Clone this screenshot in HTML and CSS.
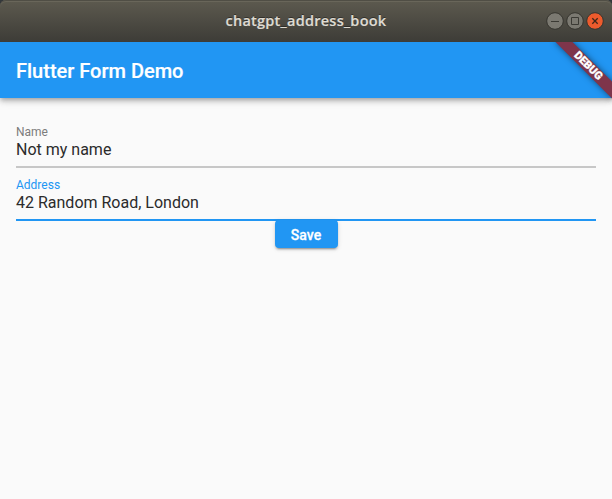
FILE: index.html
```html
<!DOCTYPE html>
<html lang="en">
<head>
<meta charset="utf-8">
<title>chatgpt_address_book</title>
<link rel="stylesheet" href="styles.css">
</head>
<body>
<div class="window">
  <header class="titlebar">
    <h1 class="window-title">chatgpt_address_book</h1>
    <div class="controls">
      <svg class="control" viewBox="0 0 18 18"><circle class="disc" cx="9" cy="9" r="8.3"/><path class="glyph" d="M5 9.5h8"/></svg>
      <svg class="control" viewBox="0 0 18 18"><circle class="disc" cx="9" cy="9" r="8.3"/><path class="glyph" d="M5.5 5.5h7v7h-7z"/></svg>
      <svg class="control close" viewBox="0 0 18 18"><circle class="disc" cx="9" cy="9" r="8.3"/><path class="glyph cross" d="M6.3 6.3l5.4 5.4M11.7 6.3l-5.4 5.4"/></svg>
    </div>
  </header>
  <main class="app">
    <div class="appbar">Flutter Form Demo</div>
    <div class="ribbon">DEBUG</div>
    <form class="form">
      <div class="field">
        <div class="label">Name</div>
        <div class="value">Not my name</div>
      </div>
      <div class="field focused">
        <div class="label">Address</div>
        <div class="value">42 Random Road, London</div>
      </div>
      <button class="save" type="button">Save</button>
    </form>
  </main>
</div>
</body>
</html>
```
FILE: styles.css
```css
* { box-sizing: border-box; }
body { margin: 0; background: #34383b; font-family: Roboto, sans-serif; }
.window { height: 499px; display: flex; flex-direction: column; }
.titlebar {
  height: 42px;
  display: grid;
  grid-template-columns: 1fr auto 1fr;
  align-items: center;
  padding-right: 8px;
  padding-left: 8px;
  border-radius: 6px 6px 0 0;
  background: linear-gradient(#5d5a4f, #3d3c37);
  box-shadow: inset 0 1px #504e45, inset 0 2px #69665a;
}
.window-title {
  grid-column: 2;
  margin: 0;
  font: 600 14.5px/20px "Open Sans", sans-serif;
  letter-spacing: .25px;
  width: 161px;
  white-space: nowrap;
  color: #dfdbd2;
  -webkit-text-stroke: .2px #dfdbd2;
  text-shadow: 0 -1px rgba(0, 0, 0, .4);
}
.controls { display: flex; gap: 2px; justify-self: end; }
.control { width: 18px; height: 18px; display: block; }
.disc { fill: #7b7971; stroke: #36352f; stroke-width: 1; }
.close .disc { fill: #ed5b2d; }
.glyph { fill: none; stroke: #3b3a34; stroke-width: 1; }
.cross { stroke: #402619; stroke-width: 1.3; }
.app { position: relative; flex: 1; overflow: hidden; background: #fafafa; }
.appbar {
  height: 56px;
  padding: 1px 16px 0;
  font-size: 20px;
  line-height: 56px;
  font-weight: 500;
  color: #fff;
  -webkit-text-stroke: .2px #fff;
  background: #2196f3;
  box-shadow: 0 2px 4px -1px rgba(0, 0, 0, .2), 0 4px 5px rgba(0, 0, 0, .14), 0 1px 10px rgba(0, 0, 0, .12);
}
.ribbon {
  position: absolute;
  top: 18px;
  right: -16px;
  width: 80px;
  height: 12px;
  transform: rotate(45deg);
  background: #7e354b;
  box-shadow: 0 0 6px rgba(0, 0, 0, .5);
  color: #fff;
  -webkit-text-stroke: .3px #fff;
  font-size: 11px;
  line-height: 12px;
  font-weight: 900;
  text-align: center;
}
.form { padding: 17px 16px 16px; display: flex; flex-direction: column; }
.field { height: 53px; padding-top: 9px; display: flex; flex-direction: column; }
.label { font-size: 12px; line-height: 16px; color: #7c7c7c; }
.value { flex: 1; font-size: 16px; line-height: 19px; color: #2b2b2b; border-bottom: 2px solid #c7c7c7; }
.focused .label { color: #2196f3; }
.focused .value { border-color: #2196f3; }
.save {
  align-self: center;
  width: 63px;
  height: 28px;
  margin: -1px 0 0;
  padding: 2px 0 0;
  border: 0;
  border-radius: 4px;
  background: #2196f3;
  color: #fff;
  font: 500 14px/26px Roboto, sans-serif;
  -webkit-text-stroke: .3px #fff;
  box-shadow: 0 3px 1px -2px rgba(0, 0, 0, .2), 0 2px 2px rgba(0, 0, 0, .14), 0 1px 5px rgba(0, 0, 0, .12);
}
```
